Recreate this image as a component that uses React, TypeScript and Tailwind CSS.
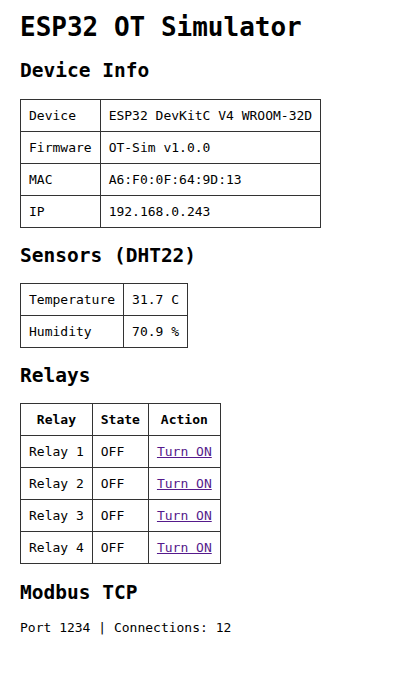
import React from 'react';

const device = [
  ['Device', 'ESP32 DevKitC V4 WROOM-32D'],
  ['Firmware', 'OT-Sim v1.0.0'],
  ['MAC', 'A6:F0:0F:64:9D:13'],
  ['IP', '192.168.0.243'],
];

const sensors = [
  ['Temperature', '31.7 C'],
  ['Humidity', '70.9 %'],
];

const relays = [1, 2, 3, 4];

const cell = 'border border-[#333] p-2 text-left font-normal';

export default function App() {
  return (
    <div className="min-h-[674px] bg-white px-[20px] pt-[12px] text-[13px] leading-[normal] text-black [font-family:'DejaVu_Sans_Mono',monospace]">
      <h1 className="mb-[17.4px] text-[26px] font-bold">ESP32 OT Simulator</h1>

      {/* Device info */}
      <h2 className="my-[16.2px] text-[19.5px] font-bold">Device Info</h2>
      <table className="border-collapse">
        <tbody>
          {device.map(([k, v]) => (
            <tr key={k}>
              <td className={cell}>{k}</td>
              <td className={cell}>{v}</td>
            </tr>
          ))}
        </tbody>
      </table>

      {/* Sensors */}
      <h2 className="my-[16.2px] text-[19.5px] font-bold">Sensors (DHT22)</h2>
      <table className="border-collapse">
        <tbody>
          {sensors.map(([k, v]) => (
            <tr key={k}>
              <td className={cell}>{k}</td>
              <td className={cell}>{v}</td>
            </tr>
          ))}
        </tbody>
      </table>

      {/* Relays */}
      <h2 className="my-[16.2px] text-[19.5px] font-bold">Relays</h2>
      <table className="border-collapse">
        <thead>
          <tr>
            <th className="border border-[#333] p-2 text-center font-bold">Relay</th>
            <th className="border border-[#333] p-2 text-center font-bold">State</th>
            <th className="border border-[#333] p-2 text-center font-bold">Action</th>
          </tr>
        </thead>
        <tbody>
          {relays.map((n) => (
            <tr key={n}>
              <td className={cell}>Relay {n}</td>
              <td className={cell}>OFF</td>
              <td className={cell}>
                <a href="#" className="text-[#551a8b] underline">Turn ON</a>
              </td>
            </tr>
          ))}
        </tbody>
      </table>

      {/* Modbus */}
      <h2 className="my-[16.2px] text-[19.5px] font-bold">Modbus TCP</h2>
      <p className="my-[13px]">Port 1234 | Connections: 12</p>
    </div>
  );
}
